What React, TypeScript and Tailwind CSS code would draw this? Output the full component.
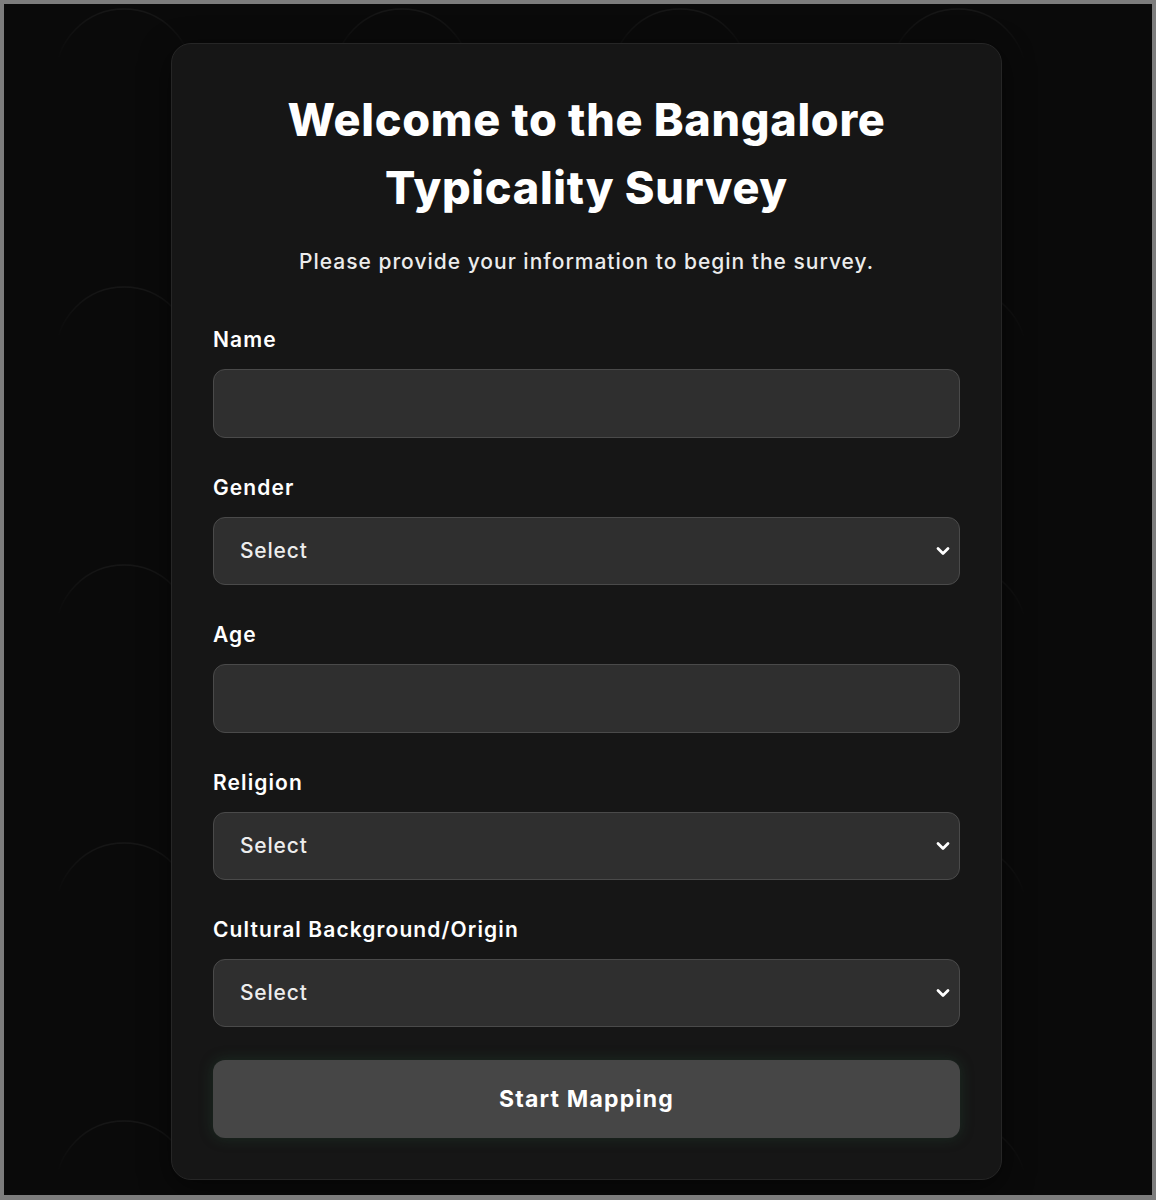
import React from "react"

const fields = [
  { label: "Name", type: "input" },
  { label: "Gender", type: "select" },
  { label: "Age", type: "input" },
  { label: "Religion", type: "select" },
  { label: "Cultural Background/Origin", type: "select" },
]

// faint ring pattern behind the card
const RingPattern: React.FC = () => (
  <svg className="absolute inset-0 h-full w-full" aria-hidden="true">
    <defs>
      <linearGradient id="ringFade" x1="0" y1="0" x2="0" y2="1">
        <stop offset="0" stopColor="#ffffff" stopOpacity="0.05" />
        <stop offset="0.25" stopColor="#ffffff" stopOpacity="0.015" />
        <stop offset="0.38" stopColor="#ffffff" stopOpacity="0" />
      </linearGradient>
      <pattern id="rings" x="-18" y="-63" width="278" height="278" patternUnits="userSpaceOnUse">
        <circle cx="138" cy="136" r="68" fill="none" stroke="url(#ringFade)" strokeWidth="1.5" />
      </pattern>
    </defs>
    <rect width="100%" height="100%" fill="url(#rings)" />
  </svg>
)

const Chevron: React.FC = () => (
  <svg width="14" height="10" viewBox="0 0 14 10" fill="none" className="text-white">
    <path d="M2 2.5 L7 7.5 L12 2.5" stroke="currentColor" strokeWidth="2.8" strokeLinecap="round" strokeLinejoin="round" />
  </svg>
)

const Field: React.FC<{ label: string; type: string }> = ({ label, type }) => (
  <div className="flex flex-col">
    <label className="text-[21px] leading-[28px] font-semibold text-white tracking-[1.1px]">{label}</label>
    {type === "input" ? (
      <div className="mt-[15px] h-[69px] rounded-[12px] border-[1.5px] border-[#4a4a4a] bg-[#2f2f2f]" />
    ) : (
      <div className="mt-[15px] flex h-[68px] items-center justify-between rounded-[12px] border-[1.5px] border-[#4a4a4a] bg-[#2f2f2f] pl-[26px] pr-[9px]">
        <span className="text-[21px] font-medium tracking-[0.8px] text-[#ededed]">Select</span>
        <Chevron />
      </div>
    )}
  </div>
)

const App: React.FC = () => {
  return (
    <div className="h-[1200px] w-[1156px] border-4 border-b-[5px] border-[#7d7d7d] bg-[#0a0a0a] font-['Inter',sans-serif]">
      <div className="relative h-full w-full overflow-hidden">
        <RingPattern />
        <div className="relative flex pl-[167px] pt-[39px]">
          <div className="w-[831px] rounded-[20px] border border-[#262626] bg-[#161616] px-[41px] pt-[42px] pb-[41px] shadow-[0_8px_30px_rgba(0,0,0,0.5)]">
            <h1 className="text-center text-[45px] leading-[68px] font-extrabold tracking-[0.7px] text-white">
              Welcome to the Bangalore
              <br />
              Typicality Survey
            </h1>
            <p className="mt-[26px] text-center text-[21px] leading-[28px] font-medium tracking-[1px] text-[#ececec]">
              Please provide your information to begin the survey.
            </p>
            <div className="mt-[50px] flex flex-col gap-[36px]">
              {fields.map((f) => (
                <Field key={f.label} label={f.label} type={f.type} />
              ))}
            </div>
            <button className="mt-[33px] h-[78px] w-full rounded-[12px] bg-[#464646] text-[23px] font-bold tracking-[1.2px] text-white shadow-[0_0_14px_rgba(40,90,60,0.35)]">
              Start Mapping
            </button>
          </div>
        </div>
      </div>
    </div>
  )
}

export default App
